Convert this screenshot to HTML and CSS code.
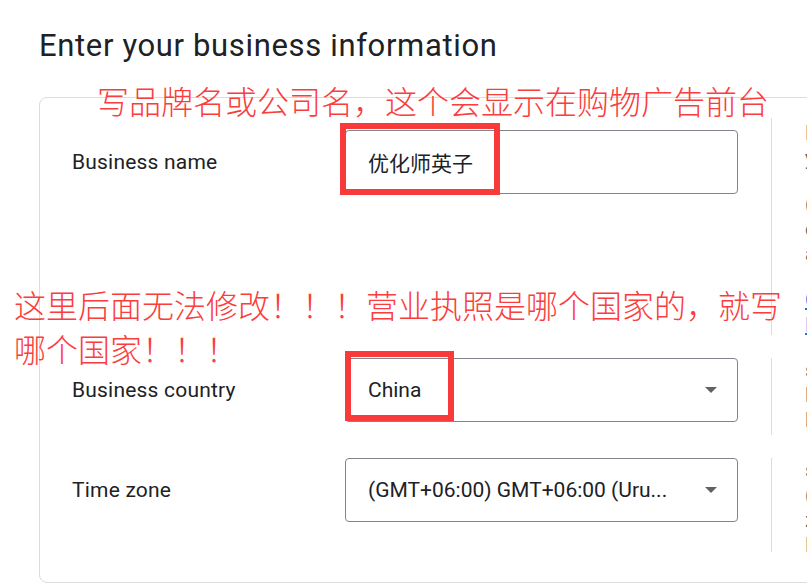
FILE: index.html
```html
<!DOCTYPE html>
<html lang="zh-CN">
<head>
<meta charset="utf-8">
<title>Enter your business information</title>
<link rel="stylesheet" href="styles.css">
</head>
<body>
<div class="page">
  <h1 class="title">Enter your business information</h1>
  <div class="card">
    <div class="row">
      <div class="field-label first">Business name</div>
      <div class="field first"><span class="value">优化师英子</span></div>
      <div class="help help-name">
        <p class="para">
          <span class="line">Enter the name of your business as it</span>
          <span class="line">you want customers to see it.</span>
        </p>
        <p class="para">
          <span class="line">(Optional) This name appears on your</span>
          <span class="line">online store listings, in ads and other</span>
          <span class="line">across Google surfaces.</span>
        </p>
        <p class="para link">
          <span class="line">Guidelines for business names</span>
          <span class="line">Learn more</span>
        </p>
      </div>
    </div>
    <div class="row">
      <div class="field-label">Business country</div>
      <div class="field"><span class="value">China</span><span class="caret"></span></div>
      <div class="help help-country">
        <span class="line">select the country where your business is</span>
        <span class="line">legally registered. You can't change this</span>
        <span class="line">later.</span>
      </div>
    </div>
    <div class="row">
      <div class="field-label">Time zone</div>
      <div class="field"><span class="value">(GMT+06:00) GMT+06:00 (Uru...</span><span class="caret"></span></div>
      <div class="help help-zone">
        <span class="line">select the time zone used for reporting</span>
        <span class="line">(for example, for order data). Your time</span>
        <span class="line">zone affects how data is shown in</span>
        <span class="line">Merchant Center.</span>
      </div>
    </div>
  </div>
</div>

<div class="mark mark-name"></div>
<div class="mark mark-country"></div>
<p class="note note-name">写品牌名或公司名，这个会显示在购物广告前台</p>
<p class="note note-country">这里后面无法修改！！！营业执照是哪个国家的，就写<br>哪个国家！！！</p>
</body>
</html>
```

FILE: styles.css
```css
html, body {
  margin: 0;
  padding: 0;
  overflow: hidden;
  background: #ffffff;
}

body {
  width: 807px;
  height: 587px;
  position: relative;
  font-family: Roboto, "Noto Sans CJK SC", sans-serif;
  color: #202124;
}

.page {
  padding-left: 39px;
}

.title {
  margin: 28px 0 0 0;
  font-size: 31px;
  line-height: 36px;
  font-weight: 400;
  letter-spacing: 0.65px;
  color: #202124;
  white-space: nowrap;
}

.card {
  margin-top: 33px;
  width: 1100px;
  border: 1px solid #dadce0;
  border-radius: 8px;
  padding: 20px 0 30px 32px;
  display: flex;
  flex-direction: column;
  gap: 23px;
}

.row {
  display: grid;
  grid-template-columns: 273px 393px 1fr;
  align-items: start;
}

.field-label {
  height: 64px;
  display: flex;
  align-items: center;
  font-size: 21px;
  letter-spacing: 0.2px;
  color: #202124;
  white-space: nowrap;
}

.field {
  height: 64px;
  box-sizing: border-box;
  border: 1px solid #80868b;
  border-radius: 4px;
  display: flex;
  align-items: center;
  padding: 0 20px 0 22px;
  font-size: 21px;
  color: #202124;
  white-space: nowrap;
}

.first {
  margin-top: 12px;
}

.value {
  flex: 1;
  overflow: hidden;
}

.caret {
  width: 0;
  height: 0;
  border-left: 6.5px solid transparent;
  border-right: 6.5px solid transparent;
  border-top: 6.5px solid #5f6368;
  margin-left: 12px;
}

.help {
  margin-left: 33px;
  border-left: 1px solid #dadce0;
  padding-left: 33px;
  font-size: 20px;
  line-height: 25px;
  color: #5f6368;
  white-space: nowrap;
}

.help-name {
  height: 217px;
  box-sizing: border-box;
  padding-top: 3px;
}

.help-country {
  height: 77px;
}

.help-zone {
  height: 94px;
}

.para {
  margin: 0 0 21px 0;
}

.link {
  color: #1a73e8;
  text-decoration: underline;
}

.line {
  display: block;
}

.mark {
  position: absolute;
  box-sizing: border-box;
  border: 6px solid #f83a3a;
}

.mark-name {
  left: 340px;
  top: 123px;
  width: 160px;
  height: 72px;
}

.mark-country {
  left: 345px;
  top: 351px;
  width: 109px;
  height: 70px;
}

.note {
  position: absolute;
  margin: 0;
  font-family: "Noto Sans CJK SC", sans-serif;
  font-size: 32px;
  font-weight: 300;
  color: #fa3d3d;
  white-space: nowrap;
}

.note-name {
  left: 97px;
  top: 84px;
  line-height: 32px;
}

.note-country {
  left: 14px;
  top: 282px;
  line-height: 44px;
}
```
